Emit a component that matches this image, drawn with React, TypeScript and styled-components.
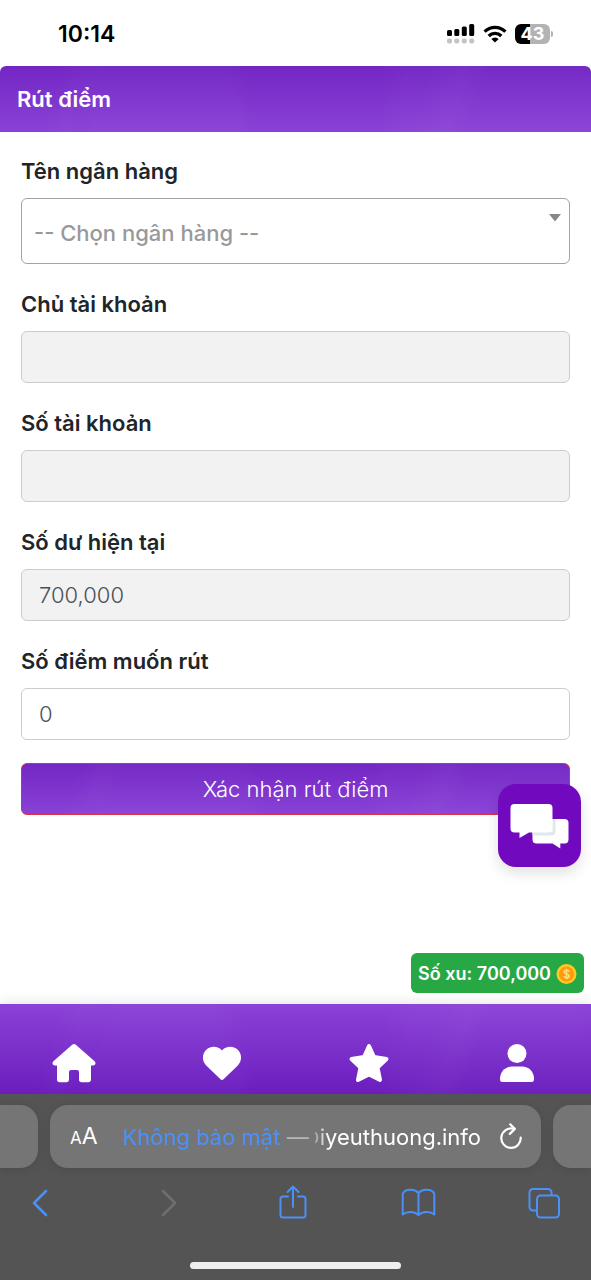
import React, { useState } from "react";
import styled, { createGlobalStyle, css } from "styled-components";

const GlobalStyle = createGlobalStyle`
  *, *::before, *::after { box-sizing: border-box; }
  body {
    margin: 0;
    background: #fff;
    color: #212529;
    font-family: Inter, "Noto Sans", sans-serif;
    font-size: 22px;
  }
  button, input, select { font: inherit; margin: 0; }
  svg { display: block; }
`;

const sheen = css`
  background-image:
    radial-gradient(ellipse 90px 160px at 28% 110%, rgba(255, 255, 255, 0.02) 80%, transparent 100%),
    linear-gradient(108deg, transparent 10%, rgba(255, 255, 255, 0.02) 14%, transparent 18% 70%, rgba(255, 255, 255, 0.025) 76%, transparent 80%),
    radial-gradient(ellipse 120px 190px at 84% 90%, rgba(255, 255, 255, 0.02) 80%, transparent 100%),
    linear-gradient(180deg, var(--from), var(--to));
`;

const Screen = styled.div`
  display: flex;
  flex-direction: column;
  min-height: 100vh;
`;

const StatusBar = styled.div`
  display: flex;
  align-items: center;
  justify-content: space-between;
  height: 66px;
  padding: 2px 38px 0 58px;
`;

const Clock = styled.time`
  font-size: 23px;
  font-weight: 600;
  color: #000;
`;

const StatusIcons = styled.div`
  display: flex;
  align-items: center;
  gap: 8px;
`;

const BatteryBox = styled.div`
  display: flex;
  align-items: center;
  gap: 1px;
`;

const Battery = styled.div`
  width: 35px;
  height: 20px;
  border-radius: 6px;
  background: linear-gradient(90deg, #000 43%, #b3b3b3 43%);
  color: #fff;
  font-size: 18px;
  font-weight: 700;
  line-height: 20px;
  text-align: center;
`;

const BatteryTip = styled.span`
  width: 2px;
  height: 6px;
  border-radius: 0 2px 2px 0;
  background: #b3b3b3;
`;

const Header = styled.header`
  --from: #7326c4;
  --to: #8942d6;
  ${sheen}
  display: flex;
  align-items: center;
  height: 66px;
  padding: 0 17px;
  border-radius: 6px 6px 0 0;
`;

const Title = styled.h1`
  margin: 0;
  color: #fff;
  font-size: 22px;
  font-weight: 600;
  line-height: 34px;
`;

const Form = styled.form`
  display: flex;
  flex-direction: column;
  flex: 1;
  gap: 23px;
  padding: 22px 21px;
`;

const Field = styled.div`
  display: flex;
  flex-direction: column;
  gap: 10px;
`;

const Label = styled.label`
  font-weight: 600;
  line-height: 34px;
`;

const Input = styled.input`
  width: 100%;
  height: 52px;
  padding: 0 17px;
  border: 1px solid #ccc;
  border-radius: 6px;
  outline: none;
  background: #fff;
  color: #495057;
  font-weight: 300;
  &:read-only { background: #f2f2f2; }
`;

const SelectBox = styled.div`
  position: relative;
`;

const Select = styled.select`
  width: 100%;
  height: 66px;
  padding: 4px 40px 0 12px;
  border: 1px solid #a3a3a3;
  border-radius: 6px;
  outline: none;
  appearance: none;
  background: #fff;
  color: #999;
  font-weight: 500;
`;

const Arrow = styled.svg`
  position: absolute;
  top: 16px;
  right: 9px;
  pointer-events: none;
`;

const Submit = styled.button`
  --from: #7326c4;
  --to: #8942d6;
  ${sheen}
  background-origin: border-box;
  height: 52px;
  border: 1px solid #e02f44;
  border-radius: 6px;
  color: #fff;
  font-weight: 300;
`;

const Dock = styled.div`
  position: sticky;
  bottom: 0;
`;

const ChatButton = styled.button`
  position: absolute;
  right: 10px;
  bottom: calc(100% + 137px);
  width: 83px;
  height: 83px;
  padding: 0;
  border: 0;
  border-radius: 18px;
  background: #7109be;
  box-shadow: 0 6px 14px rgba(0, 0, 0, 0.12);
`;

const CoinBadge = styled.div`
  position: absolute;
  right: 7px;
  bottom: calc(100% + 11px);
  display: flex;
  align-items: center;
  gap: 5px;
  height: 40px;
  padding: 0 7px;
  border-radius: 6px;
  background: #28a745;
  color: #fff;
  font-size: 18px;
  font-weight: 600;
  white-space: nowrap;
`;

const Nav = styled.nav`
  --from: #8b42d7;
  --to: #6b1dbe;
  ${sheen}
  display: grid;
  grid-template-columns: repeat(4, 1fr);
  height: 90px;
  padding-top: 37px;
  box-shadow: 0 0 14px rgba(0, 0, 0, 0.12);
`;

const NavLink = styled.a`
  display: flex;
  justify-content: center;
  color: #fff;
`;

const Browser = styled.div`
  display: flex;
  flex-direction: column;
  height: 186px;
  padding-top: 11px;
  background: #545454;
`;

const Tabs = styled.div`
  display: flex;
  gap: 12px;
`;

const TabPeek = styled.div<{ $side: "left" | "right" }>`
  width: 38px;
  height: 63px;
  border-radius: ${(p) => (p.$side === "left" ? "0 18px 18px 0" : "18px 0 0 18px")};
  background: #757575;
  box-shadow: 0 2px 10px rgba(0, 0, 0, 0.1);
`;

const AddressBar = styled.div`
  display: flex;
  flex: 1;
  align-items: center;
  height: 63px;
  padding: 0 18px 0 20px;
  border-radius: 18px;
  background: #757575;
  box-shadow: 0 2px 10px rgba(0, 0, 0, 0.1);
  color: #fff;
`;

const IconButton = styled.button`
  display: flex;
  align-items: center;
  justify-content: center;
  padding: 0;
  border: 0;
  background: none;
  color: inherit;
`;

const TextSize = styled(IconButton)`
  align-items: baseline;
  font-size: 23px;
  line-height: 34px;
`;

const SmallA = styled.span`
  font-size: 17px;
`;

const Address = styled.div`
  display: flex;
  align-items: center;
  gap: 6px;
  margin-left: auto;
  margin-right: 18px;
  line-height: 34px;
  white-space: nowrap;
`;

const Insecure = styled.span`
  color: #4a90f5;
`;

const Dash = styled.span`
  color: #b5b5b5;
`;

const Domain = styled.span`
  display: flex;
  align-items: center;
  gap: 1px;
  mask-image: linear-gradient(90deg, rgba(0, 0, 0, 0.3), #000 14px);
`;

const Toolbar = styled.div`
  display: flex;
  justify-content: space-between;
  padding: 13px 25px 0 18px;
  color: #4a90f5;
`;

const ToolButton = styled(IconButton)`
  width: 44px;
  height: 44px;
  &:disabled { color: #6e6e6e; }
`;

const HomeIndicator = styled.div`
  align-self: center;
  width: 211px;
  height: 7px;
  margin-top: auto;
  margin-bottom: 11px;
  border-radius: 4px;
  background: #eee;
`;

const SignalIcon = () => (
  <svg width="28" height="20" viewBox="0 0 28 20" aria-hidden="true">
    <g fill="#000">
      <rect x="0" y="6" width="5" height="6" rx="1.5" />
      <rect x="7.3" y="5" width="5" height="7" rx="1.5" />
      <rect x="14.8" y="2.5" width="5" height="9.5" rx="1.5" />
      <rect x="22.2" y="0" width="5" height="12" rx="1.5" />
    </g>
    <g fill="#c4c4c4">
      <rect x="0" y="14.5" width="5" height="5" rx="1.8" />
      <rect x="7.3" y="14.5" width="5" height="5" rx="1.8" />
      <rect x="14.8" y="14.5" width="5" height="5" rx="1.8" />
      <rect x="22.2" y="14.5" width="5" height="5" rx="1.8" />
    </g>
  </svg>
);

const WifiIcon = () => (
  <svg width="24" height="18" viewBox="0 0 24 18" aria-hidden="true">
    <g fill="none" stroke="#000" strokeWidth="3.2">
      <path d="M1.600 6.600a14.700 14.700 0 0 1 20.800 0" />
      <path d="M5.700 11a8.900 8.900 0 0 1 12.600 0" />
    </g>
    <path d="M12 17.600l-3.700-3.600a5.200 5.200 0 0 1 7.400 0z" fill="#000" />
  </svg>
);

const ChatIcon = () => (
  <svg width="83" height="83" viewBox="0 0 83 83" aria-hidden="true">
    <path d="M38 35h28.500a4 4 0 0 1 4 4v16.500a4 4 0 0 1-4 4H62.300v5L54.500 59.500H38.500a4 4 0 0 1-4-4V39z" fill="#fff" />
    <path d="M34.500 51.500H53.500a4 4 0 0 0 4-4V35h-3v13h-20z" fill="#dfe8ea" />
    <path d="M16.500 20h34a4 4 0 0 1 4 4v20.500a4 4 0 0 1-4 4H31L21.500 54v-5.500h-5a4 4 0 0 1-4-4V24a4 4 0 0 1 4-4z" fill="#fff" />
  </svg>
);

const CoinIcon = () => (
  <svg width="21" height="22" viewBox="0 0 21 22" aria-hidden="true">
    <circle cx="10.500" cy="12" r="10" fill="#ffc928" />
    <circle cx="10.500" cy="12" r="7.600" fill="#ff9a0c" />
    <path d="M13 9.700c-.4-1-1.300-1.500-2.500-1.500-1.400 0-2.400.7-2.400 1.800 0 2.600 5 1.200 5 3.900 0 1.200-1.100 1.900-2.600 1.900-1.300 0-2.300-.6-2.700-1.700M10.500 6.800v10.400" fill="none" stroke="#ffe27a" strokeWidth="1.500" />
  </svg>
);

const HomeIcon = () => (
  <svg width="44" height="44" viewBox="0 0 44 44" aria-hidden="true">
    <path fill="currentColor" d="M20.200 3.700a2.700 2.700 0 0 1 3.600 0L42.600 20.300c1.700 1.600.8 4.200-1.500 4.200H39V38.500a2.700 2.700 0 0 1-2.700 2.700h-6.600a2.700 2.700 0 0 1-2.700-2.700V31a2 2 0 0 0-2-2h-6a2 2 0 0 0-2 2v7.500a2.700 2.700 0 0 1-2.700 2.700H7.700A2.700 2.700 0 0 1 5 38.500V24.500H2.900C.6 24.500-.3 21.900 1.400 20.300z" />
  </svg>
);

const HeartIcon = () => (
  <svg width="44" height="44" viewBox="0 0 44 44" aria-hidden="true">
    <path fill="currentColor" d="M22 9.500c-4-4.800-11.300-4.800-15.500-.9-4.700 4.400-4.700 11.400-.3 15.900L20.200 38.100a2.600 2.600 0 0 0 3.600 0L37.800 24.500c4.400-4.500 4.400-11.500-.3-15.900C33.300 4.700 26 4.700 22 9.500z" />
  </svg>
);

const StarIcon = () => (
  <svg width="44" height="44" viewBox="0 0 44 44" aria-hidden="true">
    <path fill="currentColor" stroke="currentColor" strokeWidth="4" strokeLinejoin="round" d="M22 5l5 11 12.500 2L30.500 26.500 33 39 22 33.500 11 39l2.500-12.500L4.500 18 17 16z" />
  </svg>
);

const UserIcon = () => (
  <svg width="44" height="44" viewBox="0 0 44 44" aria-hidden="true">
    <circle cx="22" cy="12.500" r="9.500" fill="currentColor" />
    <path fill="currentColor" d="M17 25.500h10c7 0 12 5.500 12 12v1.200a2.400 2.400 0 0 1-2.400 2.400H7.400A2.400 2.400 0 0 1 5 38.700v-1.200c0-6.500 5-12 12-12z" />
  </svg>
);

const strokeProps = {
  fill: "none",
  stroke: "currentColor",
  strokeWidth: 2,
  strokeLinecap: "round" as const,
  strokeLinejoin: "round" as const,
  "aria-hidden": true,
};

const FadeMark = () => (
  <svg width="4" height="14" viewBox="0 0 4 14" {...strokeProps}>
    <path d="M0 2.500c3 2 3 8 0 10" />
  </svg>
);

const ReloadIcon = () => (
  <svg width="24" height="28" viewBox="0 0 24 28" {...strokeProps} strokeWidth={2.200}>
    <path d="M14.500 5.800A9.700 9.700 0 1 0 21.700 14.500" />
    <path d="M11.200 1.300l4.600 4.600-5 5" />
  </svg>
);

const BackIcon = () => (
  <svg width="36" height="36" viewBox="0 0 36 36" {...strokeProps} strokeWidth={2.600}>
    <path d="M24 6L12 18l12 12" />
  </svg>
);

const ForwardIcon = () => (
  <svg width="36" height="36" viewBox="0 0 36 36" {...strokeProps} strokeWidth={2.600}>
    <path d="M15 6l12 12-12 12" />
  </svg>
);

const ShareIcon = () => (
  <svg width="36" height="36" viewBox="0 0 36 36" {...strokeProps}>
    <path d="M14 11.500H9a2.500 2.500 0 0 0-2.500 2.500v16A2.500 2.500 0 0 0 9 32.500h20a2.500 2.500 0 0 0 2.500-2.500V14a2.500 2.500 0 0 0-2.500-2.500h-5" />
    <path d="M19 22V1.500M13.500 7L19 1.500 24.500 7" />
  </svg>
);

const BookIcon = () => (
  <svg width="36" height="36" viewBox="0 0 36 36" {...strokeProps}>
    <path d="M18.500 8c-3.500-4-12-4.500-15-.5a3 3 0 0 0-.8 2V29.500c4-3.500 12-3.500 15.800.5 3.800-4 11.800-4 15.800-.5V9.500a3 3 0 0 0-.8-2c-3-4-11.500-3.500-15 .5zM18.500 8v22" />
  </svg>
);

const PagesIcon = () => (
  <svg width="36" height="36" viewBox="0 0 36 36" {...strokeProps}>
    <rect x="11" y="10.500" width="22" height="22" rx="3.500" />
    <path d="M10.500 25.500H7A3.500 3.500 0 0 1 3.500 22V7.500A3.500 3.500 0 0 1 7 4h15a3.500 3.500 0 0 1 3.500 3.500V10" />
  </svg>
);

type TextFieldProps = {
  id: string;
  label: string;
  value: string;
  onChange?: (value: string) => void;
};

const TextField = ({ id, label, value, onChange }: TextFieldProps) => (
  <Field>
    <Label htmlFor={id}>{label}</Label>
    <Input
      id={id}
      type="text"
      value={value}
      readOnly={!onChange}
      onChange={onChange ? (e) => onChange(e.target.value) : undefined}
    />
  </Field>
);

const navItems = [
  { href: "#home", name: "Trang chủ", Icon: HomeIcon },
  { href: "#favorites", name: "Yêu thích", Icon: HeartIcon },
  { href: "#featured", name: "Nổi bật", Icon: StarIcon },
  { href: "#account", name: "Tài khoản", Icon: UserIcon },
];

export default function App() {
  const [amount, setAmount] = useState("0");

  return (
    <>
      <GlobalStyle />
      <Screen>
        <StatusBar>
          <Clock>10:14</Clock>
          <StatusIcons>
            <SignalIcon />
            <WifiIcon />
            <BatteryBox>
              <Battery>43</Battery>
              <BatteryTip />
            </BatteryBox>
          </StatusIcons>
        </StatusBar>

        <Header>
          <Title>Rút điểm</Title>
        </Header>

        <Form onSubmit={(e) => e.preventDefault()}>
          <Field>
            <Label htmlFor="bank">Tên ngân hàng</Label>
            <SelectBox>
              <Select id="bank" defaultValue="">
                <option value="">-- Chọn ngân hàng --</option>
              </Select>
              <Arrow width="12" height="8" viewBox="0 0 12 8" aria-hidden="true">
                <path d="M0 0h12L6 7.500z" fill="#888" />
              </Arrow>
            </SelectBox>
          </Field>
          <TextField id="holder" label="Chủ tài khoản" value="" />
          <TextField id="account-number" label="Số tài khoản" value="" />
          <TextField id="balance" label="Số dư hiện tại" value="700,000" />
          <TextField id="amount" label="Số điểm muốn rút" value={amount} onChange={setAmount} />
          <Submit type="submit">Xác nhận rút điểm</Submit>
        </Form>

        <Dock>
          <ChatButton type="button" aria-label="Chat">
            <ChatIcon />
          </ChatButton>
          <CoinBadge>
            <span>Số xu: 700,000</span>
            <CoinIcon />
          </CoinBadge>
          <Nav>
            {navItems.map(({ href, name, Icon }) => (
              <NavLink key={href} href={href} aria-label={name}>
                <Icon />
              </NavLink>
            ))}
          </Nav>
          <Browser>
            <Tabs>
              <TabPeek $side="left" />
              <AddressBar>
                <TextSize type="button">
                  <SmallA>A</SmallA>
                  <span>A</span>
                </TextSize>
                <Address>
                  <Insecure>Không bảo mật</Insecure>
                  <Dash>—</Dash>
                  <Domain>
                    <FadeMark />
                    <span>iyeuthuong.info</span>
                  </Domain>
                </Address>
                <IconButton type="button" aria-label="Tải lại">
                  <ReloadIcon />
                </IconButton>
              </AddressBar>
              <TabPeek $side="right" />
            </Tabs>
            <Toolbar>
              <ToolButton type="button" aria-label="Quay lại"><BackIcon /></ToolButton>
              <ToolButton type="button" aria-label="Tiến" disabled><ForwardIcon /></ToolButton>
              <ToolButton type="button" aria-label="Chia sẻ"><ShareIcon /></ToolButton>
              <ToolButton type="button" aria-label="Dấu trang"><BookIcon /></ToolButton>
              <ToolButton type="button" aria-label="Các tab"><PagesIcon /></ToolButton>
            </Toolbar>
            <HomeIndicator />
          </Browser>
        </Dock>
      </Screen>
    </>
  );
}
